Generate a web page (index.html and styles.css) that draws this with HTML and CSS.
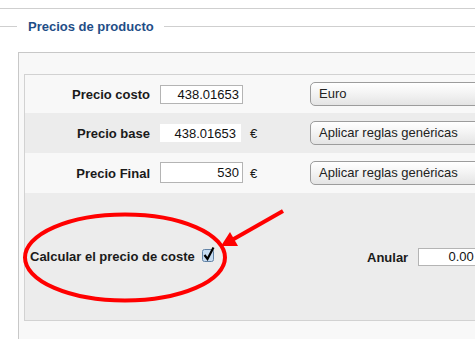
FILE: index.html
```html
<!DOCTYPE html>
<html lang="es">
<head>
    <meta charset="UTF-8">
    <title>Precios de producto</title>
    <link rel="stylesheet" href="styles.css">
</head>
<body>
    <div class="topbar"></div>
    <fieldset class="prices">
        <legend>Precios de producto</legend>
        <div class="panel">
            <table class="price-table">
                <tr class="row-light">
                    <th>Precio costo</th>
                    <td class="col-input"><input class="num" value="438.01653"></td>
                    <td class="col-cur"></td>
                    <td><span class="select">Euro</span></td>
                </tr>
                <tr class="row-dark">
                    <th>Precio base</th>
                    <td class="col-input"><input class="num num-plain" value="438.01653" readonly></td>
                    <td class="col-cur">€</td>
                    <td><span class="select">Aplicar reglas genéricas</span></td>
                </tr>
                <tr class="row-light">
                    <th>Precio Final</th>
                    <td class="col-input"><input class="num num-tall" value="530"></td>
                    <td class="col-cur">€</td>
                    <td><span class="select">Aplicar reglas genéricas</span></td>
                </tr>
                <tr class="row-dark row-calc">
                    <td colspan="3" class="calc">
                        <label>Calcular el precio de coste</label>
                        <svg class="check" width="15" height="17" viewBox="0 0 15 17">
                            <rect x="1.5" y="3.5" width="11" height="12" rx="2" fill="#c6dcf2" stroke="#6283a6"/>
                            <path d="M3.5 9 L6.5 13 L12.5 1.5" fill="none" stroke="#000" stroke-width="2.2"/>
                        </svg>
                    </td>
                    <td class="anular">
                        <label>Anular</label>
                        <input class="num num-anular" value="0.00">
                    </td>
                </tr>
            </table>
        </div>
    </fieldset>

    <svg class="markup" width="475" height="339" viewBox="0 0 475 339">
        <ellipse cx="125" cy="257.5" rx="100" ry="43" fill="none" stroke="#f00" stroke-width="4"/>
        <line x1="283" y1="211" x2="232" y2="240" stroke="#f00" stroke-width="4"/>
        <polygon points="221,246 230,232 238,246" fill="#f00"/>
    </svg>
</body>
</html>
```

FILE: styles.css
```css
html, body {
    overflow: hidden;
}
body {
    margin: 0;
    background: #fff;
    font-family: "Liberation Sans", Arial, sans-serif;
    font-size: 13px;
    color: #1a1a1a;
    position: relative;
}
.topbar {
    height: 8px;
    border-bottom: 1px solid #cfcfcf;
}
.prices {
    margin: 10px 0 0;
    padding: 0 0 0 17px;
    border: 0;
    border-top: 1px solid #cfcfcf;
}
.prices legend {
    padding: 0 10px 0 11px;
    font-weight: bold;
    font-size: 13px;
    line-height: 15px;
    color: #1f4e87;
}
.panel {
    margin: 18px 0 0 1px;
    width: 700px;
    padding: 21px 0 30px 5px;
    background: #f8f8f8;
    border: 1px solid #c8c8c8;
}
.price-table {
    width: 695px;
    border-collapse: separate;
    border-spacing: 0;
    border: 1px solid #d2d2d2;
}
.price-table th {
    width: 125px;
    padding: 0 10px 0 0;
    text-align: right;
    font-weight: bold;
    white-space: nowrap;
}
.price-table td {
    padding: 0;
    white-space: nowrap;
}
.row-light { background: #f8f8f8; height: 38px; }
.row-dark { background: #ececec; height: 40px; }
.row-light + .row-dark + .row-light { height: 40px; }
.row-calc { height: 127px; }
.col-input {
    width: 83px;
    padding-right: 7px !important;
}
.col-cur {
    width: 60px;
}
.num {
    box-sizing: border-box;
    width: 83px;
    height: 19px;
    margin: 0;
    padding: 0 3px;
    border: 1px solid #b4b4b4;
    background: #fff;
    font-family: "Liberation Sans", Arial, sans-serif;
    font-size: 13px;
    color: #111;
    text-align: right;
    display: block;
}
.num-plain {
    width: 81px;
    height: 18px;
    border: 0;
    padding-right: 5px;
}
.num-tall {
    height: 21px;
    margin-top: -2px;
}
.select {
    display: block;
    box-sizing: border-box;
    width: 240px;
    height: 24px;
    line-height: 22px;
    padding-left: 8px;
    border: 1px solid #9c9c9c;
    border-radius: 5px;
    background: linear-gradient(#ffffff, #f4f4f4 45%, #e4e4e4);
    color: #222;
}
.calc {
    padding-left: 5px !important;
}
.calc label {
    font-weight: bold;
    vertical-align: middle;
}
.check {
    vertical-align: middle;
    margin-left: 3px;
    position: relative;
    top: -2px;
}
.anular {
    padding-left: 57px !important;
}
.anular label {
    font-weight: bold;
    vertical-align: middle;
}
.num-anular {
    display: inline-block;
    vertical-align: middle;
    width: 60px;
    height: 18px;
    margin-left: 6px;
}
.markup {
    position: absolute;
    top: 0;
    left: 0;
    pointer-events: none;
}
```
